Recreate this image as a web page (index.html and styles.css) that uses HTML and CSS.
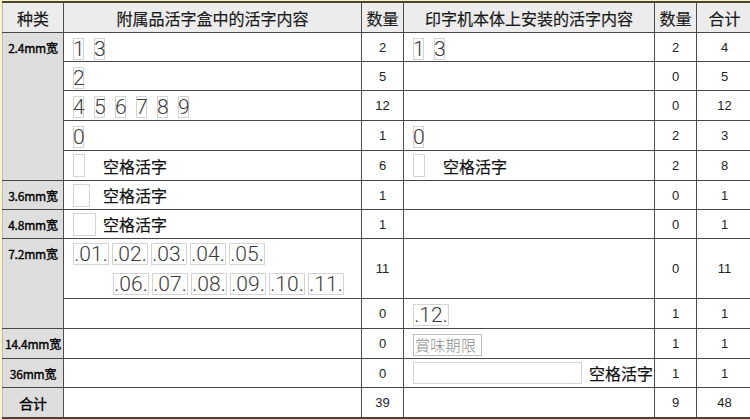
FILE: index.html
```html
<!DOCTYPE html>
<html lang="zh">
<head>
<meta charset="utf-8">
<link rel="stylesheet" href="styles.css">
</head>
<body>
<div class="page">
<table class="tbl">
  <colgroup>
    <col class="c-kind"><col class="c-acc"><col class="c-n"><col class="c-mach"><col class="c-n"><col class="c-sum">
  </colgroup>
  <thead>
    <tr class="r-head">
      <th>种类</th>
      <th>附属品活字盒中的活字内容</th>
      <th>数量</th>
      <th>印字机本体上安装的活字内容</th>
      <th>数量</th>
      <th>合计</th>
    </tr>
  </thead>
  <tbody>
    <tr class="r29">
      <td class="kind top" rowspan="5">2.4mm宽</td>
      <td class="content"><span class="g">1</span><span class="g">3</span></td>
      <td class="num">2</td>
      <td class="content"><span class="g">1</span><span class="g">3</span></td>
      <td class="num">2</td>
      <td class="num">4</td>
    </tr>
    <tr class="r29">
      <td class="content"><span class="g">2</span></td>
      <td class="num">5</td>
      <td class="content"></td>
      <td class="num">0</td>
      <td class="num">5</td>
    </tr>
    <tr class="r30">
      <td class="content"><span class="g">4</span><span class="g">5</span><span class="g">6</span><span class="g">7</span><span class="g">8</span><span class="g">9</span></td>
      <td class="num">12</td>
      <td class="content"></td>
      <td class="num">0</td>
      <td class="num">12</td>
    </tr>
    <tr class="r30">
      <td class="content"><span class="g">0</span></td>
      <td class="num">1</td>
      <td class="content"><span class="g">0</span></td>
      <td class="num">2</td>
      <td class="num">3</td>
    </tr>
    <tr class="r30">
      <td class="content"><div class="blank-row"><span class="slot"><span class="box w12"></span></span><span class="label">空格活字</span></div></td>
      <td class="num">6</td>
      <td class="content"><div class="blank-row"><span class="slot"><span class="box w12"></span></span><span class="label">空格活字</span></div></td>
      <td class="num">2</td>
      <td class="num">8</td>
    </tr>
    <tr class="r29">
      <td class="kind">3.6mm宽</td>
      <td class="content"><div class="blank-row"><span class="slot"><span class="box w17"></span></span><span class="label">空格活字</span></div></td>
      <td class="num">1</td>
      <td class="content"></td>
      <td class="num">0</td>
      <td class="num">1</td>
    </tr>
    <tr class="r29">
      <td class="kind">4.8mm宽</td>
      <td class="content"><div class="blank-row"><span class="slot"><span class="box w23"></span></span><span class="label">空格活字</span></div></td>
      <td class="num">1</td>
      <td class="content"></td>
      <td class="num">0</td>
      <td class="num">1</td>
    </tr>
    <tr class="r60">
      <td class="kind top" rowspan="2">7.2mm宽</td>
      <td class="content">
        <div class="wide-line"><span class="g wide">.01.</span><span class="g wide">.02.</span><span class="g wide">.03.</span><span class="g wide">.04.</span><span class="g wide">.05.</span></div>
        <div class="wide-line indent"><span class="g wide">.06.</span><span class="g wide">.07.</span><span class="g wide">.08.</span><span class="g wide">.09.</span><span class="g wide">.10.</span><span class="g wide">.11.</span></div>
      </td>
      <td class="num">11</td>
      <td class="content"></td>
      <td class="num">0</td>
      <td class="num">11</td>
    </tr>
    <tr class="r30">
      <td class="content"></td>
      <td class="num">0</td>
      <td class="content"><span class="g wide">.12.</span></td>
      <td class="num">1</td>
      <td class="num">1</td>
    </tr>
    <tr class="r30">
      <td class="kind">14.4mm宽</td>
      <td class="content"></td>
      <td class="num">0</td>
      <td class="content"><span class="tag">賞味期限</span></td>
      <td class="num">1</td>
      <td class="num">1</td>
    </tr>
    <tr class="r29">
      <td class="kind">36mm宽</td>
      <td class="content"></td>
      <td class="num">0</td>
      <td class="content"><div class="long-row"><span class="box long"></span><span class="label">空格活字</span></div></td>
      <td class="num">1</td>
      <td class="num">1</td>
    </tr>
    <tr class="r30 r-total">
      <td class="kind total">合计</td>
      <td class="content"></td>
      <td class="num">39</td>
      <td class="content"></td>
      <td class="num">9</td>
      <td class="num">48</td>
    </tr>
  </tbody>
</table>
</div>
</body>
</html>
```

FILE: styles.css
```css
html, body {
  margin: 0;
  padding: 0;
  background: #f8f4c6;
}

.page {
  width: 750px;
  height: 419px;
  overflow: hidden;
  padding: 1px 0 0 2px;
  box-sizing: border-box;
}

.tbl {
  border-collapse: collapse;
  table-layout: fixed;
  width: 750px;
  font-family: "Noto Sans CJK SC", "Noto Sans", sans-serif;
  color: #222;
  background: #fff;
  border-top: 2px solid #4a4530;
  border-bottom: 2px solid #4a4530;
  border-left: 1px solid #b9b9b9;
}

.c-kind { width: 61px; }
.c-acc { width: 298px; }
.c-n { width: 42px; }
.c-mach { width: 251px; }
.c-sum { width: 56px; }

.tbl th,
.tbl td {
  border-top: 1px solid #474747;
  border-bottom: 1px solid #474747;
  border-left: 1px solid #4d4d4d;
  border-right: 1px solid #4d4d4d;
  padding: 0;
}

.tbl th {
  background: #ececec;
  font-weight: normal;
  font-size: 16px;
  height: 29px;
  text-align: center;
  vertical-align: middle;
  line-height: 20px;
  color: #1a1a1a;
  -webkit-text-stroke: 0.2px #1a1a1a;
}

.tbl tr > :first-child {
  border-left: 1px solid #b9b9b9;
}

.r29 td { height: 28px; }
.r30 td { height: 29px; }
.r60 td { height: 59px; }

.kind {
  background: #dedede;
  font-size: 12px;
  text-align: center;
  vertical-align: middle;
  color: #000;
  letter-spacing: -0.2px;
  white-space: nowrap;
  -webkit-text-stroke: 0.35px #000;
}

.kind.top {
  vertical-align: top;
  padding-top: 6px;
}

.kind.total {
  font-size: 14px;
}

.tbl td.num {
  font-family: "Liberation Sans", Arial, sans-serif;
  font-size: 13px;
  text-align: center;
  vertical-align: middle;
  color: #222;
}

.content {
  padding-left: 9px !important;
  vertical-align: middle;
  white-space: nowrap;
}

.g {
  display: inline-block;
  box-sizing: border-box;
  width: 11px;
  height: 22px;
  margin-right: 10px;
  border: 1px solid #d4d4d4;
  font-family: "Roboto", "DejaVu Sans", sans-serif;
  font-weight: 300;
  font-size: 21px;
  line-height: 20px;
  text-align: center;
  color: #3a3a3a;
  vertical-align: middle;
  overflow: visible;
  letter-spacing: -1px;
  text-indent: -1px;
}

.g.wide {
  width: 36px;
  margin-right: 3px;
  letter-spacing: 0;
  text-indent: 0;
}

.wide-line {
  display: flex;
  height: 22px;
}

.wide-line + .wide-line {
  margin-top: 8px;
}

.wide-line.indent {
  padding-left: 40px;
}

.blank-row,
.long-row {
  display: flex;
  align-items: center;
}

.slot {
  display: flex;
  width: 30px;
}

.box {
  display: inline-block;
  box-sizing: border-box;
  height: 23px;
  border: 1px solid #d4d4d4;
}

.w12 { width: 12px; }
.w17 { width: 17px; }
.w23 { width: 23px; }

.box.long {
  width: 169px;
  height: 22px;
  margin-right: 7px;
}

.label {
  font-size: 16px;
  color: #111;
  line-height: 20px;
  -webkit-text-stroke: 0.2px #111;
}

.tag {
  display: inline-block;
  box-sizing: border-box;
  width: 69px;
  height: 22px;
  border: 1px solid #bdbdbd;
  font-size: 15px;
  line-height: 20px;
  color: #8a8a8a;
  font-weight: 300;
  padding-left: 1px;
  vertical-align: middle;
  letter-spacing: 0.3px;
}
```
